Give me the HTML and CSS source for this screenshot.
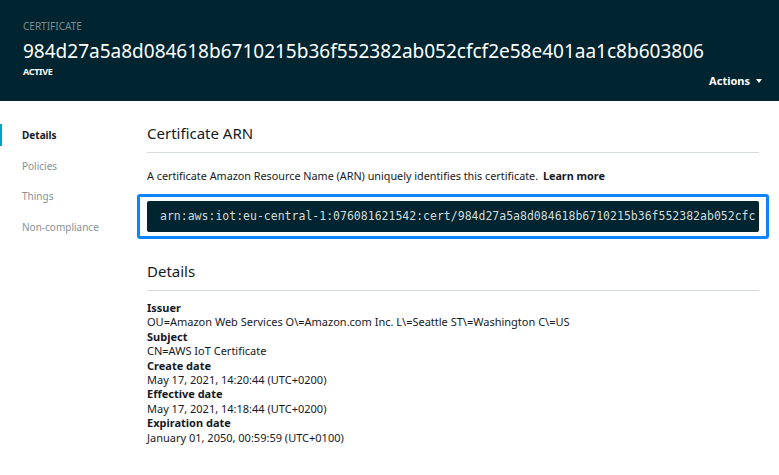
FILE: index.html
```html
<!DOCTYPE html>
<html>
<head>
<meta charset="utf-8">
<link rel="stylesheet" href="styles.css">
</head>
<body>
<header class="hdr">
  <div class="hdr-main">
    <div class="kicker">CERTIFICATE</div>
    <h1 class="title">984d27a5a8d084618b6710215b36f552382ab052cfcf2e58e401aa1c8b603806</h1>
    <div class="status">ACTIVE</div>
  </div>
  <div class="actions">Actions <span class="caret"></span></div>
</header>
<div class="body">
  <nav class="nav">
    <a class="nav-item active">Details</a>
    <a class="nav-item">Policies</a>
    <a class="nav-item">Things</a>
    <a class="nav-item">Non-compliance</a>
  </nav>
  <main class="main">
    <section class="sec">
      <h2 class="sec-title">Certificate ARN</h2>
      <p class="desc">A certificate Amazon Resource Name (ARN) uniquely identifies this certificate. <b class="learn">Learn more</b></p>
      <div class="focus">
        <div class="arn">arn:aws:iot:eu-central-1:076081621542:cert/984d27a5a8d084618b6710215b36f552382ab052cfc</div>
      </div>
    </section>
    <section class="sec sec2">
      <h2 class="sec-title">Details</h2>
      <dl class="props">
        <dt>Issuer</dt>
        <dd>OU=Amazon Web Services O\=Amazon.com Inc. L\=Seattle ST\=Washington C\=US</dd>
        <dt>Subject</dt>
        <dd>CN=AWS IoT Certificate</dd>
        <dt>Create date</dt>
        <dd>May 17, 2021, 14:20:44 (UTC+0200)</dd>
        <dt>Effective date</dt>
        <dd>May 17, 2021, 14:18:44 (UTC+0200)</dd>
        <dt>Expiration date</dt>
        <dd>January 01, 2050, 00:59:59 (UTC+0100)</dd>
      </dl>
    </section>
  </main>
</div>
</body>
</html>
```

FILE: styles.css
```css
* { box-sizing: border-box; }
html, body { margin: 0; padding: 0; background: #fff; }
body {
  font-family: "Noto Sans", "Open Sans", sans-serif;
  color: #16191f;
  width: 779px;
  height: 475px;
  overflow: hidden;
}
.hdr {
  background: #012530;
  height: 101px;
  display: flex;
  justify-content: space-between;
  align-items: flex-end;
  padding: 0 17px 13px 23px;
}
.hdr-main { align-self: flex-start; padding-top: 19px; min-width: 0; }
.kicker { color: #7d8a90; font-size: 10px; line-height: 14px; }
.title {
  margin: 6px 0 0;
  color: #fff;
  font-size: 19px;
  font-weight: 400;
  line-height: 25px;
  white-space: nowrap;
}
.status { color: #fff; font-size: 9px; font-weight: 700; line-height: 12px; margin-top: 2px; letter-spacing: -0.3px; }
.actions {
  flex: none;
  color: #fff;
  font-size: 11px;
  font-weight: 700;
  display: flex;
  align-items: center;
  gap: 6px;
}
.caret {
  width: 0; height: 0;
  border-left: 3.5px solid transparent;
  border-right: 3.5px solid transparent;
  border-top: 4px solid #fff;
}
.body { display: flex; }
.nav {
  width: 137px;
  flex: none;
  padding-top: 23px;
  display: flex;
  flex-direction: column;
}
.nav-item {
  display: block;
  font-size: 10px;
  line-height: 22px;
  height: 22px;
  margin-bottom: 8.7px;
  padding-left: 22px;
  color: #879196;
}
.nav-item.active {
  color: #16191f;
  font-weight: 700;
  box-shadow: inset 2px 0 0 #00a1c9;
}
.main { flex: 1; min-width: 0; padding: 0 10px 0 0; }
.sec { padding: 0 10px; }
.sec-title {
  margin: 0;
  font-size: 15px;
  font-weight: 400;
  line-height: 20px;
  padding-top: 22px;
  padding-bottom: 9px;
  border-bottom: 1px solid #d5dbdb;
  color: #16191f;
}
.desc {
  margin: 15px 0 0;
  font-size: 10.8px;
  line-height: 16px;
}
.learn { font-weight: 700; margin-left: 2px; }
.focus {
  margin: 10px -10px 0;
  border: 3px solid #0a84ff;
  border-radius: 3px;
  padding: 4px 7px;
}
.arn {
  background: #012530;
  color: #d5dbdb;
  font-family: "DejaVu Sans Mono", monospace;
  font-size: 11.5px;
  line-height: 31px;
  height: 31px;
  padding-left: 13px;
  white-space: nowrap;
  overflow: hidden;
  border-radius: 2px;
}
.sec2 .sec-title { padding-top: 22px; }
.props { margin: 10px 0 0; font-size: 11px; line-height: 14.4px; }
.props dt { font-weight: 700; }
.props dd { margin: 0; }
```
